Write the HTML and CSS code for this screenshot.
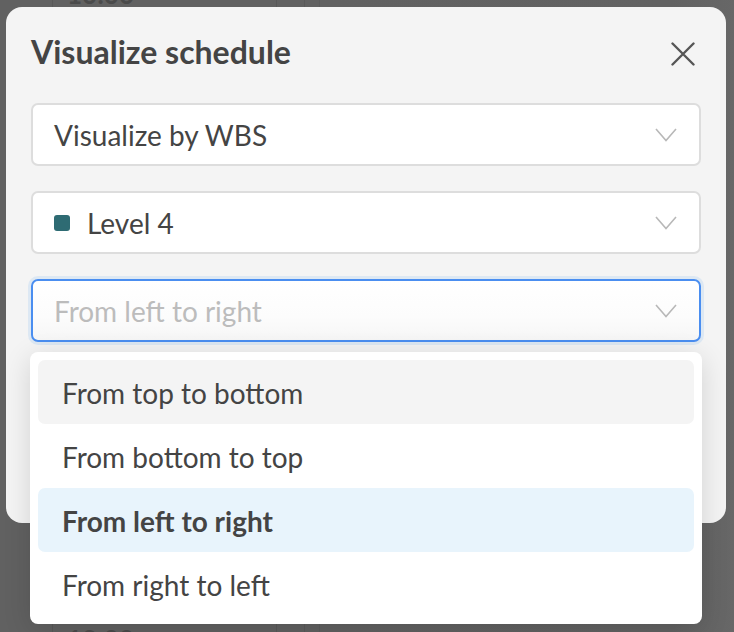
FILE: index.html
```html
<!DOCTYPE html>
<html lang="en">
<head>
<meta charset="utf-8">
<title>Visualize schedule</title>
<link rel="stylesheet" href="styles.css">
</head>
<body>
<div class="backdrop">
  <div class="col col-a"></div>
  <div class="col col-b">
    <span class="time time-top">10:00</span>
    <span class="time time-bottom">12:00</span>
  </div>
  <div class="col col-c"></div>
  <div class="col col-d"></div>
  <div class="col col-e"></div>
</div>

<div class="modal" role="dialog" aria-label="Visualize schedule">
  <div class="modal-header">
    <h1 class="modal-title">Visualize schedule</h1>
    <button class="close-btn" aria-label="Close">
      <svg width="24" height="24" viewBox="0 0 24 24" fill="none" stroke="#555" stroke-width="2.4" stroke-linecap="round"><path d="M1.5 1.5 L22.5 22.5 M22.5 1.5 L1.5 22.5"/></svg>
    </button>
  </div>

  <div class="fields">
    <div class="select">
      <span class="select-value">Visualize by WBS</span>
      <svg class="chevron" width="22" height="14" viewBox="0 0 22 14" fill="none" stroke="#b8b8b8" stroke-width="1.6"><path d="M1 1 L11 12.5 L21 1"/></svg>
    </div>
    <div class="select">
      <span class="swatch"></span>
      <span class="select-value">Level 4</span>
      <svg class="chevron" width="22" height="14" viewBox="0 0 22 14" fill="none" stroke="#b8b8b8" stroke-width="1.6"><path d="M1 1 L11 12.5 L21 1"/></svg>
    </div>
    <div class="select select-focused">
      <span class="select-value placeholder">From left to right</span>
      <svg class="chevron" width="22" height="14" viewBox="0 0 22 14" fill="none" stroke="#b8b8b8" stroke-width="1.6"><path d="M1 1 L11 12.5 L21 1"/></svg>
    </div>
  </div>
</div>

<ul class="menu" role="listbox">
  <li class="menu-item hovered">From top to bottom</li>
  <li class="menu-item">From bottom to top</li>
  <li class="menu-item selected">From left to right</li>
  <li class="menu-item">From right to left</li>
</ul>
</body>
</html>
```

FILE: styles.css
```css
* { box-sizing: border-box; }

html, body {
  margin: 0;
  padding: 0;
  width: 734px;
  height: 632px;
  overflow: hidden;
}

body {
  background: #616161;
  font-family: Lato, "Noto Sans", sans-serif;
  color: #444;
  position: relative;
}

/* dimmed app behind the dialog */
.backdrop {
  display: flex;
  height: 632px;
}
.col { height: 100%; }
.col-a { width: 53px; border-right: 1px solid #585858; }
.col-b {
  width: 224px;
  border-right: 1px solid #585858;
  display: flex;
  flex-direction: column;
  justify-content: space-between;
  padding-left: 14px;
}
.col-c { width: 28px; border-right: 1px solid #595959; }
.col-d { width: 15px; border-right: 1px solid #5c5c5c; }
.col-e { flex: 1; background: linear-gradient(90deg, #616161 0%, #626262 85%, #676767 100%); }
.time {
  font-size: 26px;
  font-weight: 700;
  color: #4a4a4a;
  line-height: 26px;
}
.time-top { margin-top: -19px; }
.time-bottom { margin-bottom: -20px; }

/* dialog */
.modal {
  position: absolute;
  left: 6px;
  top: 7px;
  width: 720px;
  height: 516px;
  background: #f4f4f4;
  border-radius: 16px;
  padding: 0 24px 0 25px;
}

.modal-header {
  display: flex;
  align-items: center;
  justify-content: space-between;
  height: 96px;
}

.modal-title {
  margin: 0;
  font-size: 32px;
  font-weight: 700;
  color: #444;
  line-height: 38px;
  margin-top: -6px;
}

.close-btn {
  border: 0;
  background: none;
  padding: 0;
  width: 24px;
  height: 24px;
  margin-right: 7px;
  margin-top: -2px;
  display: flex;
}

.fields {
  display: flex;
  flex-direction: column;
  gap: 25px;
}

.select {
  height: 63px;
  width: 670px;
  background: #fff;
  border: 2px solid #dddddd;
  border-radius: 7px;
  display: flex;
  align-items: center;
  padding: 0 22px 0 21px;
  font-size: 28px;
  color: #444;
}

.select-value { flex: 1; line-height: 34px; padding-top: 1px; }

.placeholder { color: #bcbcbc; }

.chevron { flex: none; margin-top: 1px; }

.swatch {
  width: 16px;
  height: 16px;
  border-radius: 3px;
  background: #2e6b73;
  margin-right: 17px;
  margin-top: 1px;
}

.select-focused {
  border-color: #4a8ef0;
  box-shadow: 0 0 0 3px #dde8f3;
  background: linear-gradient(180deg, #ffffff 0%, #fcfcfc 60%, #f6f6f6 100%);
}

/* dropdown */
.menu {
  position: absolute;
  left: 30px;
  top: 352px;
  width: 672px;
  margin: 0;
  padding: 8px;
  list-style: none;
  background: #fff;
  border-radius: 8px;
  box-shadow: 0 6px 28px rgba(0, 0, 0, 0.14);
}

.menu-item {
  height: 64px;
  display: flex;
  align-items: center;
  padding: 1px 0 0 24px;
  font-size: 28px;
  color: #444;
  border-radius: 7px;
}

.menu-item.hovered { background: #f4f4f4; }
.menu-item.selected { background: #e8f4fc; font-weight: 700; }
```
